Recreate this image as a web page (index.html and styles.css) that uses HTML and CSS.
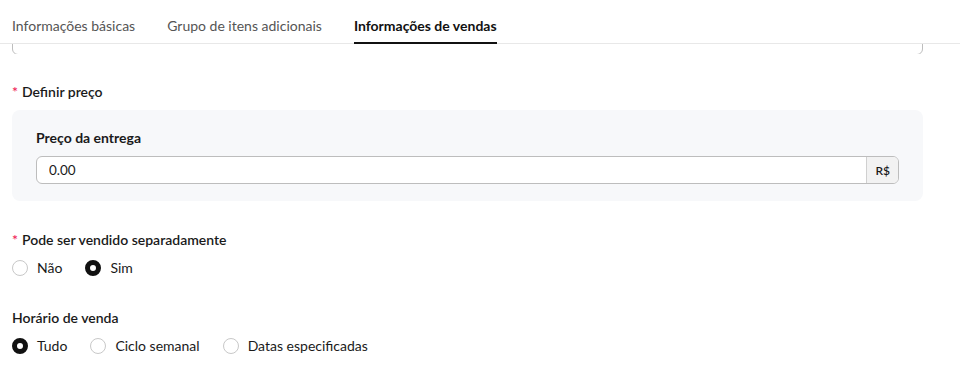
FILE: index.html
```html
<!DOCTYPE html>
<html lang="pt-BR">
<head>
    <meta charset="UTF-8">
    <meta name="viewport" content="width=device-width, initial-scale=1.0">
    <title>Informações de vendas</title>
    <link rel="stylesheet" href="styles.css">
</head>
<body>
    <div class="tabs">
        <div class="tab">Informações básicas</div>
        <div class="tab">Grupo de itens adicionais</div>
        <div class="tab active">Informações de vendas</div>
    </div>
    <div class="clip">
        <div class="clip-box"></div>
    </div>
    <div class="content">
        <div class="form-item">
            <div class="label"><span class="req">*</span>Definir preço</div>
            <div class="price-box">
                <div class="sub-label">Preço da entrega</div>
                <div class="input-group">
                    <input type="text" value="0.00">
                    <span class="addon">R$</span>
                </div>
            </div>
        </div>
        <div class="form-item">
            <div class="label"><span class="req">*</span>Pode ser vendido separadamente</div>
            <div class="radios">
                <label class="radio"><span class="dot"></span>Não</label>
                <label class="radio checked"><span class="dot"></span>Sim</label>
            </div>
        </div>
        <div class="form-item">
            <div class="label">Horário de venda</div>
            <div class="radios">
                <label class="radio checked"><span class="dot"></span>Tudo</label>
                <label class="radio"><span class="dot"></span>Ciclo semanal</label>
                <label class="radio"><span class="dot"></span>Datas especificadas</label>
            </div>
        </div>
    </div>
</body>
</html>
```

FILE: styles.css
```css
body {
    margin: 0;
    font-family: Lato, "Noto Sans", sans-serif;
    font-size: 14px;
    color: #1a1a1a;
    background: #fff;
}
.tabs {
    display: flex;
    gap: 32px;
    height: 43px;
    padding-left: 12px;
    border-bottom: 1px solid #e8e8e8;
}
.tab {
    display: flex;
    align-items: center;
    padding-top: 7px;
    color: #555;
    font-size: 14px;
    position: relative;
}
.tab.active {
    color: #111;
    font-weight: 700;
}
.tab.active::after {
    content: "";
    position: absolute;
    left: 0;
    right: 0;
    bottom: -1px;
    height: 2px;
    background: #111;
}
.clip {
    height: 10px;
    overflow: hidden;
    padding: 0 37px 0 12px;
}
.clip-box {
    height: 40px;
    margin-top: -31px;
    border: 1px solid #bdbdbd;
    border-radius: 6px;
}
.content {
    padding: 0 37px 0 12px;
}
.form-item {
    margin-top: 28px;
}
.form-item + .form-item {
    margin-top: 29px;
}
.label {
    line-height: 20px;
    font-weight: 600;
    font-size: 14px;
}
.req {
    color: #f0245a;
    margin-right: 4px;
}
.price-box {
    margin-top: 8px;
    background: #f7f8fa;
    border-radius: 8px;
    padding: 18px 24px 17px;
}
.sub-label {
    line-height: 20px;
    font-weight: 700;
    font-size: 14px;
}
.input-group {
    display: flex;
    margin-top: 8px;
    height: 28px;
    border: 1px solid #bdbdbd;
    border-radius: 6px;
    background: #fff;
    box-sizing: border-box;
    overflow: hidden;
}
.input-group input {
    flex: 1;
    border: none;
    outline: none;
    padding: 0 12px;
    font-family: inherit;
    font-size: 13.5px;
    color: #1a1a1a;
    background: transparent;
}
.addon {
    display: flex;
    align-items: center;
    padding: 0 8px;
    background: #f2f2f2;
    border-left: 1px solid #d0d0d0;
    font-size: 12px;
    font-weight: 600;
}
.radios {
    display: flex;
    gap: 23px;
    margin-top: 8px;
    line-height: 20px;
}
.form-item:last-child {
    margin-top: 30px;
}
.radio {
    display: flex;
    align-items: center;
    gap: 9px;
    font-size: 14px;
}
.dot {
    width: 16px;
    height: 16px;
    box-sizing: border-box;
    border: 1px solid #c8c8c8;
    border-radius: 50%;
    background: #fff;
}
.radio.checked .dot {
    border: 5px solid #111;
}
```
